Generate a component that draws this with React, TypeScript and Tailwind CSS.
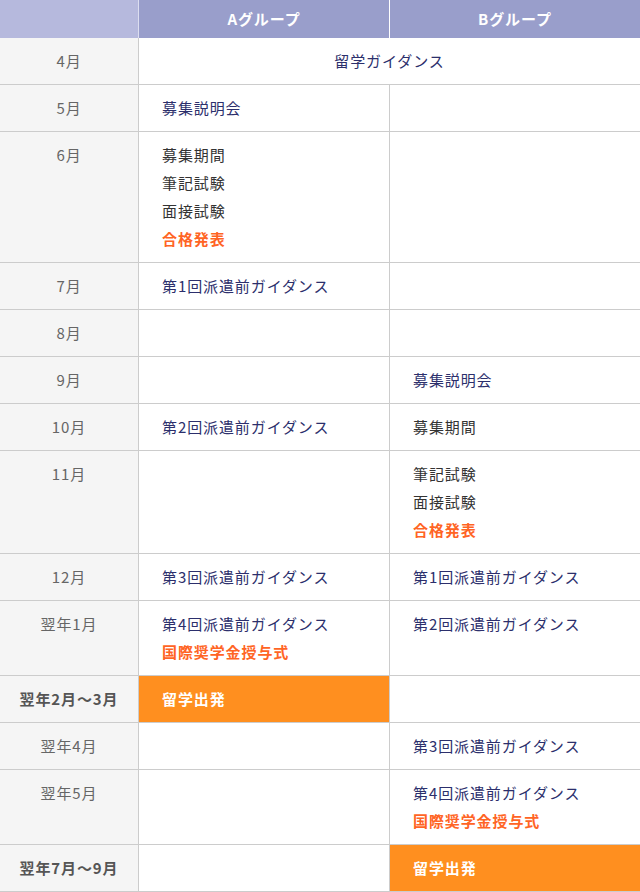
import type { ReactNode } from 'react'

type Line = { text: string; tone?: 'navy' | 'gray' | 'accent' }
type Cell = Line[] | 'depart' | null

interface Row {
  month: string
  strong?: boolean
  a: Cell
  b: Cell
}

const nv = (text: string): Line => ({ text, tone: 'navy' })
const gy = (text: string): Line => ({ text, tone: 'gray' })
const ac = (text: string): Line => ({ text, tone: 'accent' })

const ROWS: Row[] = [
  { month: '5月', a: [nv('募集説明会')], b: null },
  { month: '6月', a: [gy('募集期間'), gy('筆記試験'), gy('面接試験'), ac('合格発表')], b: null },
  { month: '7月', a: [nv('第1回派遣前ガイダンス')], b: null },
  { month: '8月', a: null, b: null },
  { month: '9月', a: null, b: [nv('募集説明会')] },
  { month: '10月', a: [nv('第2回派遣前ガイダンス')], b: [gy('募集期間')] },
  { month: '11月', a: null, b: [gy('筆記試験'), gy('面接試験'), ac('合格発表')] },
  { month: '12月', a: [nv('第3回派遣前ガイダンス')], b: [nv('第1回派遣前ガイダンス')] },
  { month: '翌年1月', a: [nv('第4回派遣前ガイダンス'), ac('国際奨学金授与式')], b: [nv('第2回派遣前ガイダンス')] },
  { month: '翌年2月～3月', strong: true, a: 'depart', b: null },
  { month: '翌年4月', a: null, b: [nv('第3回派遣前ガイダンス')] },
  { month: '翌年5月', a: null, b: [nv('第4回派遣前ガイダンス'), ac('国際奨学金授与式')] },
  { month: '翌年7月～9月', strong: true, a: null, b: 'depart' },
]

const TONE = {
  navy: 'text-[#2c2f6c]',
  gray: 'text-[#333333]',
  accent: 'text-[#ff6424] font-bold',
}

function Body({ cell }: { cell: Cell }): ReactNode {
  if (cell === 'depart') {
    return <p className="leading-[28px] font-bold text-white">留学出発</p>
  }
  if (!cell) return null
  return cell.map((l, i) => (
    <p key={i} className={`leading-[28px] ${TONE[l.tone ?? 'navy']}`}>
      {l.text}
    </p>
  ))
}

export default function App() {
  return (
    <div
      className="w-[640px] bg-white text-[15px] tracking-[0.06em]"
      style={{ fontFamily: '"Noto Sans CJK JP", "Noto Sans", sans-serif' }}
    >
      {/* ヘッダー */}
      <div className="flex h-[38px] text-white font-bold">
        <div className="w-[138px] bg-[#b6b9dd]" />
        <div className="w-[251px] flex items-center justify-center bg-[#999ecb] border-l border-[#dcdef0]">
          Aグループ
        </div>
        <div className="flex-1 flex items-center justify-center bg-[#999ecb] border-l border-white">
          Bグループ
        </div>
      </div>

      {/* 4月 */}
      <div className="flex border-b border-[#cccccc]">
        <div className="w-[138px] bg-[#f5f5f5] text-center py-[9px] leading-[28px] text-[#666666]">4月</div>
        <div className="flex-1 border-l border-[#cccccc] py-[9px] text-center leading-[28px] text-[#2c2f6c]">
          留学ガイダンス
        </div>
      </div>

      {ROWS.map(r => (
        <div key={r.month} className="flex border-b border-[#cccccc]">
          <div
            className={`w-[138px] shrink-0 bg-[#f5f5f5] text-center py-[9px] leading-[28px] ${
              r.strong ? 'font-bold text-[#555555]' : 'text-[#666666]'
            }`}
          >
            {r.month}
          </div>
          <div
            className={`w-[251px] shrink-0 border-l border-[#cccccc] py-[9px] pl-[23px] ${
              r.a === 'depart' ? 'bg-[#ff8f1f]' : ''
            }`}
          >
            <Body cell={r.a} />
          </div>
          <div
            className={`flex-1 border-l border-[#cccccc] py-[9px] pl-[23px] ${
              r.b === 'depart' ? 'bg-[#ff8f1f]' : ''
            }`}
          >
            <Body cell={r.b} />
          </div>
        </div>
      ))}
    </div>
  )
}
